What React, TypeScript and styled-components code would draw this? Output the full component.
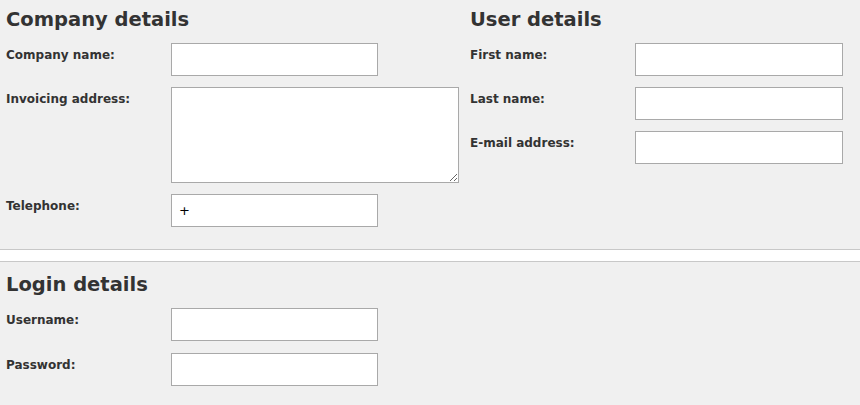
import React from "react";
import styled, { createGlobalStyle } from "styled-components";

const Global = createGlobalStyle`
  html, body { margin: 0; padding: 0; background: #f0f0f0; }
  body { font-family: "DejaVu Sans", Verdana, sans-serif; color: #333333; }
  #root { background: #ffffff; }
`;

const Section = styled.section<{ $top: number; $bottom: number; $borderTop?: boolean; $borderBottom?: boolean }>`
  background: #f0f0f0;
  padding: ${(p) => p.$top}px 0 ${(p) => p.$bottom}px 6px;
  border-top: ${(p) => (p.$borderTop ? "1px solid #c8c8c8" : "none")};
  border-bottom: ${(p) => (p.$borderBottom ? "1px solid #c8c8c8" : "none")};
`;

const Spacer = styled.div`
  height: 11px;
  background: #ffffff;
`;

const Columns = styled.div`
  display: grid;
  grid-template-columns: 464px 1fr;
  align-items: start;
`;

const Column = styled.div`
  display: flex;
  flex-direction: column;
`;

const Heading = styled.h2`
  margin: 0 0 12px 0;
  font-family: "DejaVu Sans", Verdana, sans-serif;
  font-size: 19.5px;
  font-weight: bold;
  line-height: 23px;
  color: #333333;
`;

const Rows = styled.div<{ $gap?: number }>`
  display: flex;
  flex-direction: column;
  gap: ${(p) => p.$gap ?? 11}px;
`;

const Row = styled.div`
  display: grid;
  grid-template-columns: 165px auto;
  align-items: start;
`;

const Label = styled.label`
  font-family: "DejaVu Sans", Verdana, sans-serif;
  font-size: 12px;
  font-weight: bold;
  line-height: 14px;
  padding-top: 5px;
  color: #333333;
`;

const TextInput = styled.input<{ $wide?: boolean }>`
  box-sizing: border-box;
  width: ${(p) => (p.$wide ? 208 : 207)}px;
  height: 33px;
  margin: 0;
  padding: 0 7px;
  border: 1px solid #a9a9a9;
  border-radius: 0;
  background: #ffffff;
  font-family: "DejaVu Sans", Verdana, sans-serif;
  font-size: 13px;
  color: #000000;
  outline: none;
`;

const TextArea = styled.textarea`
  box-sizing: border-box;
  width: 288px;
  height: 96px;
  margin: 0;
  padding: 4px 7px;
  border: 1px solid #a9a9a9;
  border-radius: 0;
  background: #ffffff;
  font-family: "DejaVu Sans", Verdana, sans-serif;
  font-size: 13px;
  color: #000000;
  outline: none;
  display: block;
`;

const Field: React.FC<{ label: string; children: React.ReactNode }> = ({ label, children }) => (
  <Row>
    <Label>{label}</Label>
    {children}
  </Row>
);

export default function App() {
  return (
    <>
      <Global />
      <Section $top={8} $bottom={22} $borderBottom>
        <Columns>
          <Column>
            <Heading>Company details</Heading>
            <Rows>
              <Field label="Company name:">
                <TextInput type="text" />
              </Field>
              <Field label="Invoicing address:">
                <TextArea />
              </Field>
              <Field label="Telephone:">
                <TextInput type="text" defaultValue="+" />
              </Field>
            </Rows>
          </Column>
          <Column>
            <Heading>User details</Heading>
            <Rows>
              <Field label="First name:">
                <TextInput type="text" $wide />
              </Field>
              <Field label="Last name:">
                <TextInput type="text" $wide />
              </Field>
              <Field label="E-mail address:">
                <TextInput type="text" $wide />
              </Field>
            </Rows>
          </Column>
        </Columns>
      </Section>
      <Spacer />
      <Section $top={11} $bottom={19} $borderTop>
        <Heading>Login details</Heading>
        <Rows $gap={12}>
          <Field label="Username:">
            <TextInput type="text" />
          </Field>
          <Field label="Password:">
            <TextInput type="password" />
          </Field>
        </Rows>
      </Section>
    </>
  );
}
